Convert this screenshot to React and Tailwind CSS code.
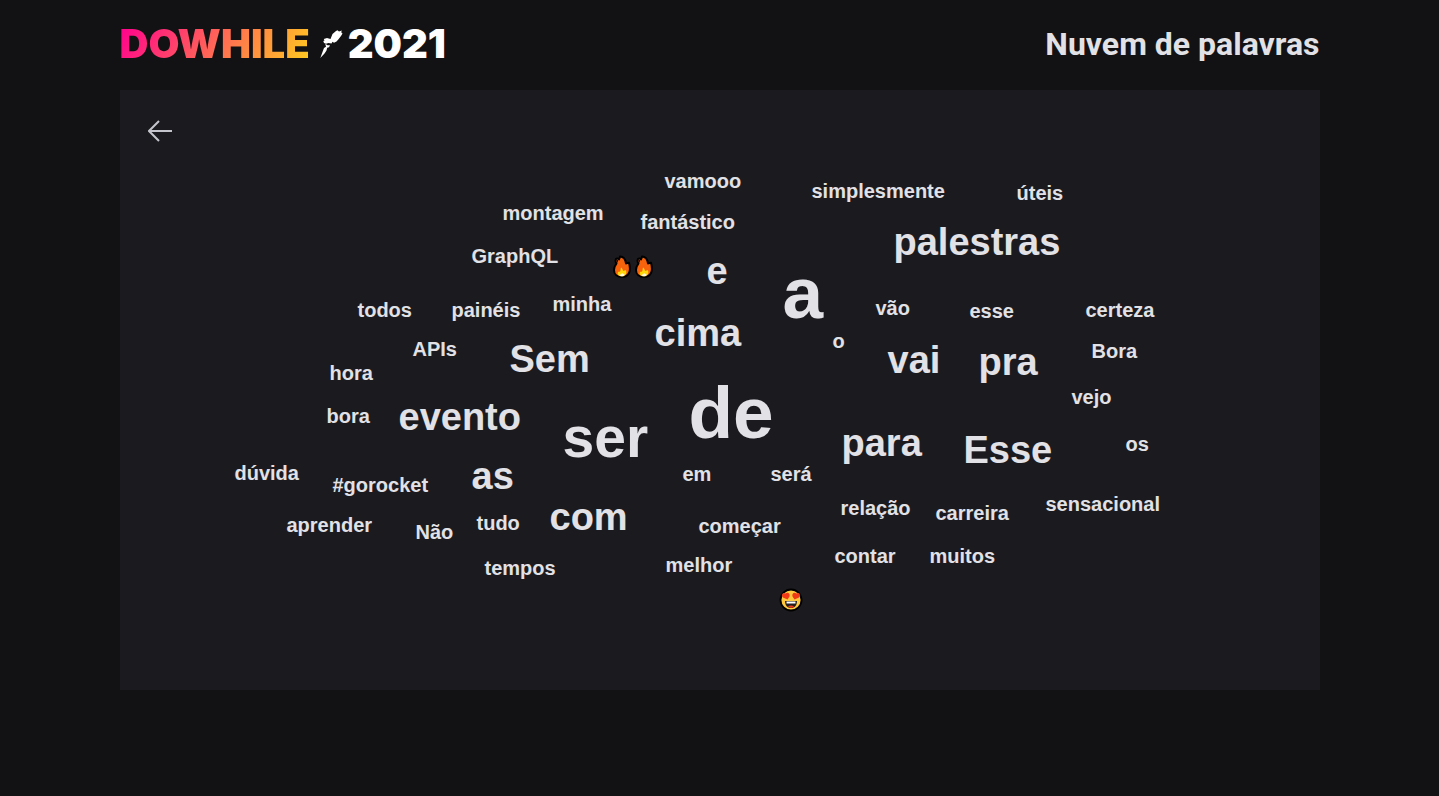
import React from "react";

const sizes = {
  sm: "text-[20px]",
  md: "text-[38px]",
  lg: "text-[57px]",
  xl: "text-[73px]",
};

// x and y are the left end of each word's baseline on the 1200 x 600 canvas.
const baselineOffset = { sm: 17, md: 32, lg: 48, xl: 62 };

const words = [
  ["vamooo", "sm", 545, 98],
  ["simplesmente", "sm", 692, 108],
  ["úteis", "sm", 897, 110],
  ["montagem", "sm", 383, 130],
  ["fantástico", "sm", 521, 139],
  ["palestras", "md", 774, 165],
  ["GraphQL", "sm", 352, 173],
  ["e", "md", 587, 194],
  ["a", "xl", 663, 228],
  ["todos", "sm", 238, 227],
  ["painéis", "sm", 332, 227],
  ["minha", "sm", 433, 221],
  ["vão", "sm", 756, 225],
  ["esse", "sm", 850, 228],
  ["certeza", "sm", 966, 227],
  ["cima", "md", 535, 256],
  ["o", "sm", 713, 258],
  ["APIs", "sm", 293, 266],
  ["Sem", "md", 390, 282],
  ["vai", "md", 768, 283],
  ["pra", "md", 859, 285],
  ["Bora", "sm", 972, 268],
  ["hora", "sm", 210, 290],
  ["vejo", "sm", 952, 314],
  ["bora", "sm", 207, 333],
  ["evento", "md", 279, 340],
  ["ser", "lg", 443, 367],
  ["de", "xl", 569, 348],
  ["para", "md", 722, 366],
  ["Esse", "md", 844, 373],
  ["os", "sm", 1006, 361],
  ["dúvida", "sm", 115, 390],
  ["#gorocket", "sm", 213, 402],
  ["as", "md", 352, 399],
  ["em", "sm", 563, 391],
  ["será", "sm", 651, 391],
  ["relação", "sm", 721, 425],
  ["carreira", "sm", 816, 430],
  ["sensacional", "sm", 926, 421],
  ["aprender", "sm", 167, 442],
  ["Não", "sm", 296, 449],
  ["tudo", "sm", 357, 440],
  ["com", "md", 430, 440],
  ["começar", "sm", 579, 443],
  ["contar", "sm", 715, 473],
  ["muitos", "sm", 810, 473],
  ["tempos", "sm", 365, 485],
  ["melhor", "sm", 546, 482],
];

function Rocket() {
  return (
    <svg className="h-7 w-6 shrink-0" viewBox="0 0 24 28" fill="#fff" aria-hidden="true">
      <path d="M12.500 4L16 1L17.500 0.200L19 1.500L21.800 0.500L21.200 2.300L22.500 3.500L21 6L18.500 9.300L16.500 11.500L14 12.700L12.500 11.800L11.500 13.500L8.500 13L6 13.700L4 13L3.300 11L4.500 10.500L3.800 9L7 8L10.500 9Z" />
      <path d="M5.300 13.800L7.500 15.300L10 15.200L9 17.200L7.200 17.800L6.500 20.500L4.500 23.500L0.300 28L2.500 22L4 18L6 16.800Z" />
    </svg>
  );
}

function Flame() {
  return (
    <svg className="h-6 w-[22px]" viewBox="0 0 22 24" aria-hidden="true">
      <path d="M9 1.500C12.500 1.500 14.500 4.500 15 8.500C16 8.500 17 7.500 18 7.800C19 11.500 19.500 15 18 18C16.500 21 14 22 11 22C6 22 3 19 3 15C3 12 4 10.500 5.500 8.500C4 6.500 4.200 3.800 6 3.500C7.200 3.300 7.800 3.800 8 4.500C8.300 3.500 9 2.500 9 1.500Z" fill="#f7630c" stroke="#000" strokeWidth="2" strokeLinejoin="round" />
      <path d="M5.500 5L7 4.800L6.700 7.500L5.800 7.500Z" fill="#000" />
      <path d="M10 12.500C11.500 13.500 11.500 15 12.500 16C13.500 16 14 15 15 15.500C16 18.500 14.500 21.300 11 21.300C7.500 21.300 6 19.500 7 17C8 16.500 8.500 17 9 16.500C9.800 15.500 9.500 14 10 12.500Z" fill="#ffd60a" />
      <path d="M11 18C12 19.500 13.500 18.500 13.500 19.500C13.500 20.800 12.500 21.300 11 21.300C9.500 21.300 8.500 20.500 8.800 19.500C9.800 19.500 10.500 19.300 11 18Z" fill="#fff8df" />
    </svg>
  );
}

function HeartEyes() {
  return (
    <svg className="h-6 w-6" viewBox="0 0 24 24" role="img" aria-label="Apaixonado">
      <circle cx="12" cy="12" r="10.500" fill="#ffc83d" stroke="#000" strokeWidth="1.800" />
      <path d="M8.500 11.500L4 9.500C1.500 7 4 3.500 6.500 5.500C9 3.500 11.500 6 10.500 8.500Z" fill="#f03a17" />
      <path d="M15.500 11.500L13.500 8.500C12.500 6 15 3.500 17.500 5.500C20 3.500 22.500 7 20 9.500Z" fill="#f03a17" />
      <path d="M6 13H18C18 17.500 15.500 20 12 20C8.500 20 6 17.500 6 13Z" fill="#231f20" />
      <path d="M7.500 13.500H16.500V15.500H7.500Z" fill="#fff" />
      <path d="M9 18.500C10.500 17 13.500 17 15 18.500C13.500 20.300 10.500 20.300 9 18.500Z" fill="#f03a17" />
    </svg>
  );
}

function Header() {
  return (
    <header className="flex h-[90px] items-center justify-between pb-0.5">
      <a
        href="#"
        aria-label="DoWhile 2021"
        className="flex items-center gap-2.5 font-['Inter',sans-serif] text-[40px] leading-none font-black"
      >
        <span className="bg-[linear-gradient(120deg,#ff008e,#ffcd1e)] bg-clip-text text-transparent">
          DOWHILE
        </span>
        <span className="flex items-center gap-1 text-white">
          <Rocket />
          2021
        </span>
      </a>
      <h1 className="font-['Roboto',sans-serif] text-[32px] leading-none font-bold">
        Nuvem de palavras
      </h1>
    </header>
  );
}

export default function App() {
  return (
    <div className="min-h-screen bg-[#121214] text-[#e1e1e6]">
      <div className="mx-auto w-full max-w-[1200px]">
        <Header />
        <main className="relative min-h-[600px] bg-[#1b1b1f] p-7">
          <button type="button" aria-label="Voltar" className="block cursor-pointer text-[#c4c4cc]">
            <svg className="size-6" viewBox="0 0 24 24" fill="none" stroke="currentColor" strokeWidth="2" aria-hidden="true">
              <path d="M24 13H1M11 3L1 13L11 23" />
            </svg>
          </button>
          <ul className="font-['Liberation_Sans',Arial,sans-serif] font-bold">
            {words.map(([text, size, x, y]) => (
              <li
                key={text}
                className={`absolute leading-none whitespace-nowrap ${sizes[size]}`}
                style={{ left: x, top: y - baselineOffset[size] }}
              >
                {text}
              </li>
            ))}
            <li className="absolute top-[165px] left-[491px] flex" role="img" aria-label="Fogo">
              <Flame />
              <Flame />
            </li>
            <li className="absolute top-[498px] left-[659px]">
              <HeartEyes />
            </li>
          </ul>
        </main>
      </div>
    </div>
  );
}
